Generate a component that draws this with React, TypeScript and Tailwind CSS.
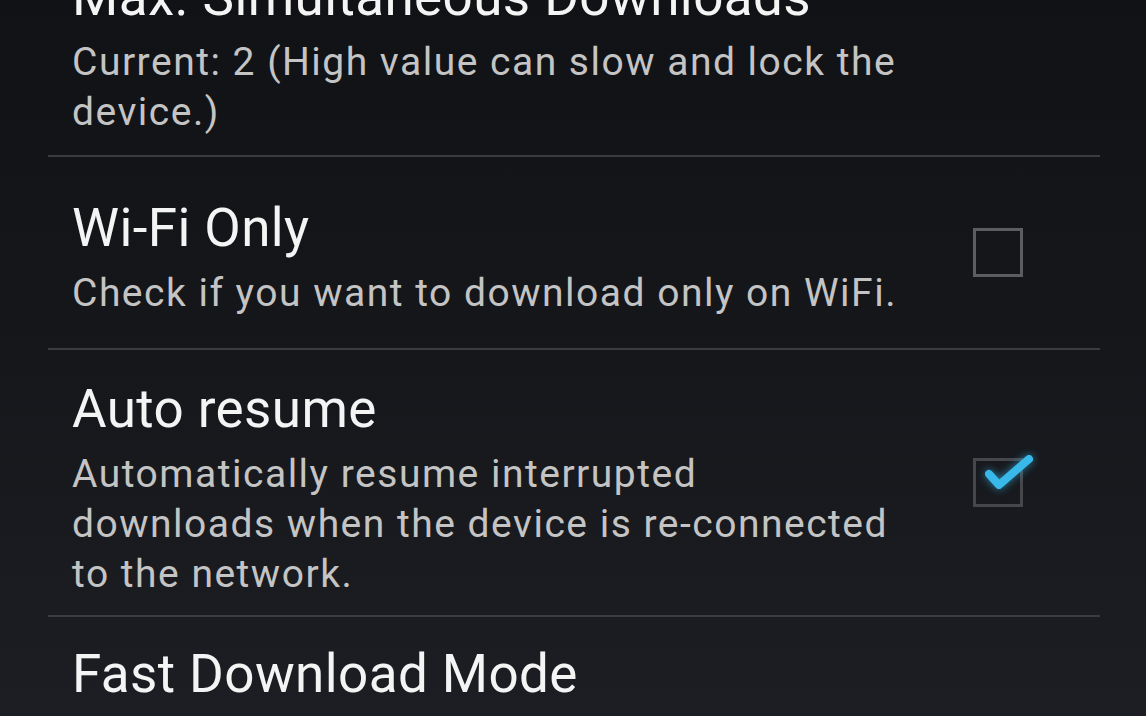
import React from "react";

type Pref = {
  title: string;
  summary: string;
  check?: "on" | "off";
  pad: string;
};

const prefs: Pref[] = [
  {
    title: "Max. Simultaneous Downloads",
    summary: "Current: 2 (High value can slow and lock the device.)",
    pad: "pt-0 pb-[18px]",
  },
  {
    title: "Wi-Fi Only",
    summary: "Check if you want to download only on WiFi.",
    check: "off",
    pad: "pt-[41px] pb-[30px]",
  },
  {
    title: "Auto resume",
    summary:
      "Automatically resume interrupted downloads when the device is re-connected to the network.",
    check: "on",
    pad: "pt-[29px] pb-[16px]",
  },
  {
    title: "Fast Download Mode",
    summary: "",
    pad: "pt-[27px] pb-[20px]",
  },
];

function CheckBox({ on }: { on: boolean }) {
  return (
    <div
      className={
        "relative h-[49px] w-[50px] border-[3px] " +
        (on ? "border-[#45474b]" : "border-[#5b5d61]")
      }
    >
      {on && (
        <svg
          className="absolute left-[4px] top-[-7px] h-[46px] w-[58px] drop-shadow-[0_0_4px_rgba(51,181,229,0.7)]"
          viewBox="0 0 58 46"
          fill="none"
        >
          <path
            d="M9 20 L19 31 L49 5"
            stroke="#38b9ea"
            strokeWidth="8"
            strokeLinecap="round"
            strokeLinejoin="round"
          />
        </svg>
      )}
    </div>
  );
}

export default function App() {
  return (
    <div
      className="h-[716px] w-[1146px] overflow-hidden bg-gradient-to-b from-[#101216] via-[#15171b] to-[#1c1e23] pl-[48px] pr-[46px]"
      style={{ fontFamily: "Roboto, 'Liberation Sans', sans-serif" }}
    >
      <div className="-mt-[33px] flex flex-col">
        {prefs.map((p, i) => (
          <div key={p.title}>
            {i > 0 && <div className="h-[2px] bg-[#3a3c40]" />}
            <div className="flex items-center pl-[24px] pr-[77px]">
              <div className={"w-[834px] flex-none " + p.pad}>
                <div className="text-[53px] leading-[60px] tracking-[0.4px] text-[#f4f4f4]">
                  {p.title}
                </div>
                {p.summary && (
                  <div className="mt-[10px] text-[39px] leading-[50px] tracking-[1.5px] text-[#c4c4c4]">
                    {p.summary}
                  </div>
                )}
              </div>
              <div className="flex flex-1 justify-end">
                {p.check && <CheckBox on={p.check === "on"} />}
              </div>
            </div>
          </div>
        ))}
      </div>
    </div>
  );
}
